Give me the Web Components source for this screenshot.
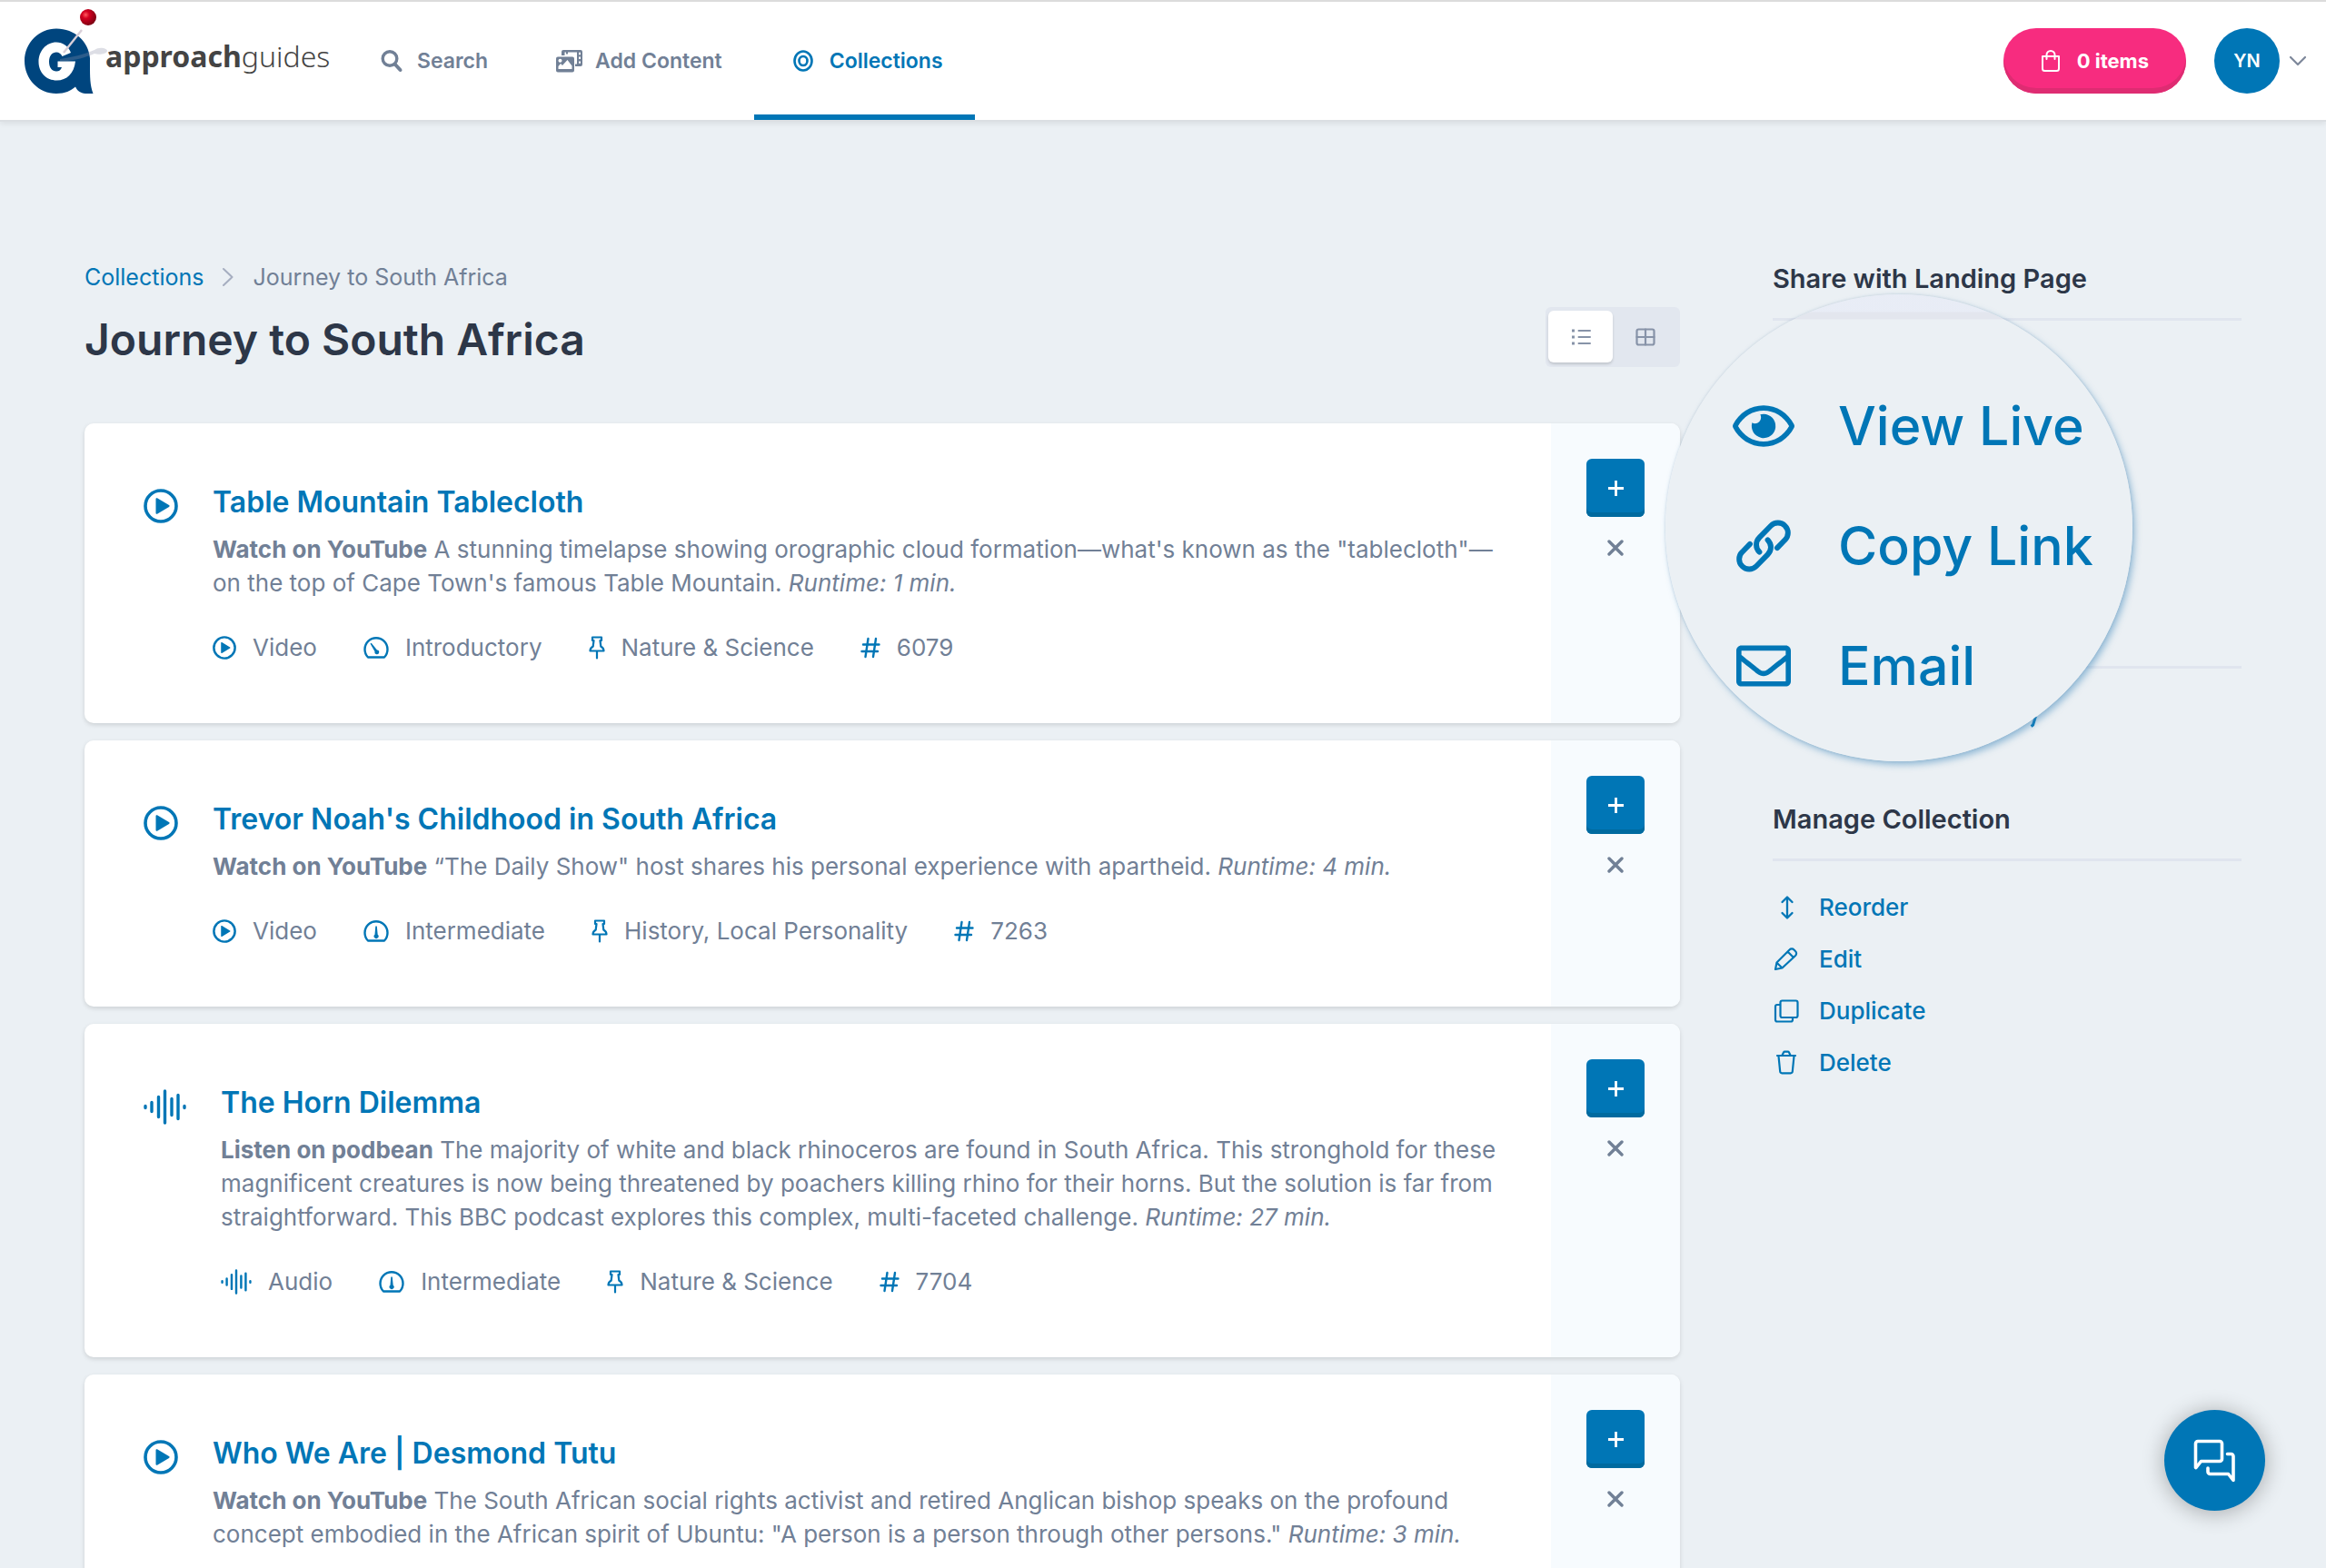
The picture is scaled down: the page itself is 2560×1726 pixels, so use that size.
<!DOCTYPE html>
<html lang="en">
<head>
<meta charset="utf-8">
<meta name="viewport" content="width=device-width, initial-scale=1">
<title>Journey to South Africa</title>
<style>
  :root {
    --blue: #0076b6;
    --blue-dark: #006a9f;
    --pink: #f72c7f;
    --pink-dark: #de2c72;
    --ink: #2d3748;
    --muted: #718096;
    --line: #e0e5ee;
    --page: #ebf0f4;
    --tint: #f7fbfe;
  }
  body {
    margin: 0;
    background: var(--page);
    color: var(--muted);
    font-family: Inter, "Liberation Sans", sans-serif;
    font-size: 26px;
    line-height: 37px;
  }
</style>
</head>
<body>
<ag-app>
  <ag-header slot="header">
    <ag-nav-link icon="search" href="#search">Search</ag-nav-link>
    <ag-nav-link icon="media" href="#add">Add Content</ag-nav-link>
    <ag-nav-link icon="target" href="#collections" current>Collections</ag-nav-link>
    <ag-cart slot="account">0 items</ag-cart>
    <ag-user slot="account">YN</ag-user>
  </ag-header>

  <ag-title slot="content" parent="Collections">Journey to South Africa</ag-title>

  <ag-card slot="content" icon="play">
    <span slot="title">Table Mountain Tablecloth</span>
    <b>Watch on YouTube</b> A stunning timelapse showing orographic cloud formation—what's known as the "tablecloth"—on the top of Cape Town's famous Table Mountain. <i>Runtime: 1 min.</i>
    <ag-meta slot="meta" icon="play">Video</ag-meta>
    <ag-meta slot="meta" icon="gauge-low">Introductory</ag-meta>
    <ag-meta slot="meta" icon="pin">Nature &amp; Science</ag-meta>
    <ag-meta slot="meta" icon="hash">6079</ag-meta>
  </ag-card>

  <ag-card slot="content" icon="play">
    <span slot="title">Trevor Noah's Childhood in South Africa</span>
    <b>Watch on YouTube</b> “The Daily Show" host shares his personal experience with apartheid. <i>Runtime: 4 min.</i>
    <ag-meta slot="meta" icon="play">Video</ag-meta>
    <ag-meta slot="meta" icon="gauge-mid">Intermediate</ag-meta>
    <ag-meta slot="meta" icon="pin">History, Local Personality</ag-meta>
    <ag-meta slot="meta" icon="hash">7263</ag-meta>
  </ag-card>

  <ag-card slot="content" icon="wave">
    <span slot="title">The Horn Dilemma</span>
    <b>Listen on podbean</b> The majority of white and black rhinoceros are found in South Africa. This stronghold for these magnificent creatures is now being threatened by poachers killing rhino for their horns. But the solution is far from straightforward. This BBC podcast explores this complex, multi-faceted challenge. <i>Runtime: 27 min.</i>
    <ag-meta slot="meta" icon="wave">Audio</ag-meta>
    <ag-meta slot="meta" icon="gauge-mid">Intermediate</ag-meta>
    <ag-meta slot="meta" icon="pin">Nature &amp; Science</ag-meta>
    <ag-meta slot="meta" icon="hash">7704</ag-meta>
  </ag-card>

  <ag-card slot="content" icon="play">
    <span slot="title">Who We Are | Desmond Tutu</span>
    <b>Watch on YouTube</b> The South African social rights activist and retired Anglican bishop speaks on the profound concept embodied in the African spirit of Ubuntu: "A person is a person through other persons." <i>Runtime: 3 min.</i>
  </ag-card>

  <ag-section slot="aside" heading="Share with Landing Page" rows="4"></ag-section>
  <ag-section slot="aside" rows="1"><ag-icon name="tail"></ag-icon></ag-section>
  <ag-section slot="aside" heading="Manage Collection">
    <ag-action icon="reorder" href="#reorder">Reorder</ag-action>
    <ag-action icon="edit" href="#edit">Edit</ag-action>
    <ag-action icon="duplicate" href="#duplicate">Duplicate</ag-action>
    <ag-action icon="trash" href="#delete">Delete</ag-action>
  </ag-section>

  <ag-lens slot="lens">
    <ag-action large icon="eye" href="#view">View Live</ag-action>
    <ag-action large icon="link" href="#copy">Copy Link</ag-action>
    <ag-action large icon="mail" href="#email">Email</ag-action>
  </ag-lens>

  <ag-chat slot="chat"></ag-chat>
</ag-app>

<script>
/* name: [viewBox, width, height, markup] */
const LINE = 'fill="none" stroke="currentColor" stroke-linecap="round" stroke-linejoin="round"';
const GAUGE = '<path d="M5 22.5C2.8 20.3 1.5 17.2 1.5 13.8a12.5 12.5 0 0 1 25 0c0 3.400-1.300 6.500-3.500 8.700z" ' + LINE + ' stroke-width="2.400"/>';
const ICONS = {
  search: ['0 0 24 26', 24, 26, `<circle cx="10" cy="10.500" r="7.800" ${LINE} stroke-width="3.400"/><path d="M16 17l5.500 6" ${LINE} stroke-width="4"/>`],
  media: ['0 0 29 26', 29, 26, `<path fill-rule="evenodd" fill="currentColor" d="M8 1h19a2 2 0 0 1 2 2v14a2 2 0 0 1-2 2h-6v-2.500h2v-13H9.500V7H6V3a2 2 0 0 1 2-2zM11 3.500v2h2v-2zM25 3.800v2.400h2V3.800zM25 8.600V11h2V8.600zM25 13.400v2.400h2v-2.400z"/><path fill-rule="evenodd" fill="currentColor" d="M2 8.500h16a2 2 0 0 1 2 2v13a2 2 0 0 1-2 2H2a2 2 0 0 1-2-2v-13a2 2 0 0 1 2-2zM2.500 22h15v-3.500l-5-6.500-5.500 6-2-2-2.500 3zM4.500 10.800a2 2 0 1 0 .010 0z"/>`],
  target: ['0 0 22 26', 22, 26, `<ellipse cx="11" cy="13" rx="9.500" ry="10.500" ${LINE} stroke-width="2.600"/><ellipse cx="11" cy="13" rx="4.500" ry="5" ${LINE} stroke-width="2.600"/>`],
  bag: ['0 0 22 26', 22, 26, `<path d="M2 8h18v13.500a2.500 2.500 0 0 1-2.500 2.500h-13A2.500 2.500 0 0 1 2 21.500z" ${LINE} stroke-width="2"/><path d="M6.500 11V6.500a4.500 4.500 0 0 1 9 0V11" ${LINE} stroke-width="2"/>`],
  down: ['0 0 20 12', 20, 12, `<path d="M2 2l8 8 8-8" ${LINE} stroke-width="2.200"/>`],
  right: ['0 0 14 22', 14, 22, `<path d="M2 2l9.500 9L2 20" ${LINE} stroke-width="2"/>`],
  list: ['0 0 22 20', 22, 20, `<path d="M8.500 3H21M8.500 10H21M8.500 17H21" ${LINE} stroke-width="2"/><path d="M1 1.500h3v3H1zM1 8.500h3v3H1zM1 15.500h3v3H1z" fill="currentColor"/>`],
  grid: ['0 0 22 20', 22, 20, `<rect x="1.500" y="1.500" width="19" height="17" rx="2" ${LINE} stroke-width="2.200"/><path d="M11 1.500v17M1.500 10h19" ${LINE} stroke-width="2.200"/>`],
  play: ['0 0 38 38', 38, 38, `<circle cx="19" cy="19" r="17" ${LINE} stroke-width="3.600"/><path d="M13.500 11.200v15.600a1 1 0 0 0 1.500.9l13-7.800a1 1 0 0 0 0-1.800l-13-7.800a1 1 0 0 0-1.500.9z" fill="currentColor"/>`],
  wave: ['0 0 47 39', 47, 39, `<path d="M2 18.500v2M9 14.500v10M16.500 8.500v22M23.500 2v35M31 10.500v18M38 6.500v26M45 18.500v2" ${LINE} stroke-width="3.400"/>`],
  'gauge-low': ['0 0 28 25', 28, 25, GAUGE + '<path d="M7.500 7.500l1.200-.8 6.300 7.800a2.400 2.400 0 1 1-2.500 1.800z" fill="currentColor"/>'],
  'gauge-mid': ['0 0 28 25', 28, 25, GAUGE + '<path d="M13.300 6.500h1.500l.9 9.200a2.500 2.500 0 1 1-3.200 0z" fill="currentColor"/>'],
  pin: ['0 0 18 26', 18, 26, `<path d="M4 1.500h10v3.500h-1.500l.8 6.500c2 1.200 3.200 2.800 3.200 5h-15c0-2.200 1.200-3.800 3.200-5L5.500 5H4z" ${LINE} stroke-width="2.200"/><path d="M9 17v7.500" ${LINE} stroke-width="2.200"/>`],
  hash: ['0 0 22 24', 22, 24, `<path d="M8.500 2l-3 20M17 2l-3 20M3 8.500h17.500M1.500 16h17.500" ${LINE} stroke-width="2.400"/>`],
  plus: ['0 0 19 19', 19, 19, `<path d="M9.500 1v17M1 9.500h17" fill="none" stroke="currentColor" stroke-width="2.800"/>`],
  cross: ['0 0 18 18', 18, 18, `<path d="M2 2l14 14M16 2L2 16" ${LINE} stroke-width="3.400"/>`],
  reorder: ['0 0 28 26', 28, 26, `<path d="M15 2v22M9.500 7L15 1.500 20.500 7M9.500 19l5.500 5.500 5.500-5.500" ${LINE} stroke-width="2.300"/>`],
  edit: ['0 0 28 26', 28, 26, `<path d="M2 24l1.500-7.500L17.500 2.500a3.400 3.400 0 0 1 5 0l1.500 1.500a3.400 3.400 0 0 1 0 5L9.500 22.500zM16 5l6 6M3.800 17l5.200 5" ${LINE} stroke-width="2.200"/>`],
  duplicate: ['0 0 28 26', 28, 26, `<rect x="7.500" y="1.500" width="19" height="18.500" rx="2" ${LINE} stroke-width="2.200"/><path d="M7 6H4a2 2 0 0 0-2 2v14.500a2 2 0 0 0 2 2h15a2 2 0 0 0 2-2V20.500" ${LINE} stroke-width="2.200"/>`],
  trash: ['0 0 28 27', 28, 27, `<path d="M4 6h20M5.500 6.500l1.700 17a2 2 0 0 0 2 1.800h9.600a2 2 0 0 0 2-1.800l1.700-17M9.500 5.500l1.500-3a1.500 1.500 0 0 1 1.300-.8h3.400a1.500 1.500 0 0 1 1.300.8l1.500 3" ${LINE} stroke-width="2.200"/>`],
  eye: ['0 64 576 384', 68, 46, '<path fill="currentColor" d="M288 144a110.940 110.940 0 0 0-31.240 5 55.400 55.400 0 0 1 7.240 27 56 56 0 0 1-56 56 55.400 55.400 0 0 1-27-7.240A111.710 111.710 0 1 0 288 144zm284.520 97.400C518.290 135.590 410.930 64 288 64S57.680 135.640 3.480 241.410a32.350 32.350 0 0 0 0 29.190C57.710 376.410 165.070 448 288 448s230.320-71.640 284.520-177.410a32.350 32.350 0 0 0 0-29.190zM288 400c-98.650 0-189.090-55-237.930-144C98.910 167 189.340 112 288 112s189.090 55 237.930 144C477.100 345 386.660 400 288 400z"/>'],
  link: ['0.8 0.8 22.400 22.400', 60, 60, `<path d="M10.300 14.500c-1.700-1.700-1.700-4.300 0-6l4.700-4.800a4.050 4.050 0 0 1 5.800 0 4.050 4.050 0 0 1 0 5.800l-3.200 3.300M13.700 9.500c1.700 1.700 1.700 4.300 0 6L9 20.300a4.050 4.050 0 0 1-5.800 0 4.050 4.050 0 0 1 0-5.800l3.200-3.300" ${LINE} stroke-width="2.200"/>`],
  mail: ['0 64 512 384', 60, 46, '<path fill="currentColor" d="M464 64H48C21.490 64 0 85.490 0 112v288c0 26.510 21.490 48 48 48h416c26.510 0 48-21.490 48-48V112c0-26.510-21.490-48-48-48zm0 48v40.805c-22.422 18.259-58.168 46.651-134.587 106.490-16.841 13.247-50.201 45.072-73.413 44.701-23.208.375-56.579-31.459-73.413-44.701C106.180 199.465 70.425 171.067 48 152.805V112h416zM48 400V214.398c22.914 18.251 55.409 43.862 104.938 82.646 21.857 17.205 60.134 55.186 103.062 54.955 42.717.231 80.509-37.199 103.053-54.947 49.528-38.783 82.032-64.401 104.947-82.653V400H48z"/>'],
  chat: ['0 0 48 48', 48, 48, `<path d="M5 2.500h24a2.500 2.500 0 0 1 2.500 2.500v17a2.500 2.500 0 0 1-2.500 2.500H8.500L3 31.500a.3.300 0 0 1-.5-.2V5A2.500 2.500 0 0 1 5 2.500z" ${LINE} stroke-width="3.600"/><path d="M37.500 16.500h4A2.500 2.500 0 0 1 44 19v26.500l-5.500-7H18.500a2.500 2.500 0 0 1-2.500-2.500v-4" ${LINE} stroke-width="3.600"/>`],
  tail: ['0 0 300 57', 300, 57, `<path d="M289.500 30.500l-3 9.500-2 1.500" fill="none" stroke="currentColor" stroke-width="3"/>`],
  logo: ['0 0 90 100', 90, 100, `
    <defs><radialGradient id="ball" cx=".35" cy=".35" r=".75"><stop offset="0" stop-color="#ff5a5e"/><stop offset=".3" stop-color="#d4001f"/><stop offset="1" stop-color="#6d0010"/></radialGradient></defs>
    <path d="M36 25.500C17 25.500 1 41 1 61s15.500 36 35 36c9.500 0 16-3 21-7.500 2 4.500 5.500 7 11 7.500h8.500C73 88 73 78 73 66V58C71.500 40 56.500 25.500 36 25.500z" fill="#00457e"/>
    <path d="M52 52c-3-7.500-9-11.500-16-11.500C25 40.500 16.500 50 16.500 62S25 82.500 36.500 82.500c11 0 19-7.500 20.500-21H37.500v6.500h4.500c-1 3-3 4.500-6 4.500-4.500 0-8-4-8-10.500s3.500-10.500 8-10.500c3 0 5 1.500 6.500 4.500z" fill="#fff"/>
    <path d="M40 61c14 1 28-4 38-8 5 2 14 0 14-3s-9-5-14-1c-12 5-25 8-38 10z" fill="#8d93a8" opacity=".3"/>
    <path d="M44 52L64 27" stroke="#d9cfd8" stroke-width="2.400"/>
    <circle cx="71" cy="13" r="9" fill="url(#ball)"/>`]
};

const define = (tag, html, setup) => {
  const template = document.createElement('template');
  template.innerHTML = html;
  customElements.define(tag, class extends HTMLElement {
    connectedCallback() {
      if (this.shadowRoot) return;
      const root = this.attachShadow({ mode: 'open' });
      root.append(template.content.cloneNode(true));
      if (setup) setup(this, root);
    }
  });
};

define('ag-icon', `<style>
  :host { display: flex; flex: none; }
  svg { display: block; overflow: visible; width: var(--w); height: var(--h); }
</style>`, (host, root) => {
  const [box, w, h, markup] = ICONS[host.getAttribute('name')];
  const width = Number(host.getAttribute('width')) || w;
  const holder = document.createElement('template');
  holder.innerHTML = `<svg viewBox="${box}" aria-hidden="true">${markup}</svg>`;
  host.style.setProperty('--w', width + 'px');
  host.style.setProperty('--h', Math.round(width * h / w) + 'px');
  root.append(holder.content);
});

define('ag-app', `<style>
  :host { display: flex; flex-direction: column; height: 100vh; overflow: hidden; }
  .body { flex: 1; min-height: 0; overflow-y: auto; scrollbar-width: none; }
  .layout { display: grid; grid-template-columns: minmax(0, 1fr) 516px; column-gap: 102px; padding: 152px 93px 60px; }
  main { display: flex; flex-direction: column; gap: 19px; }
  aside { position: relative; }
</style>
<slot name="header"></slot>
<div class="body"><div class="layout">
  <main><slot name="content"></slot></main>
  <aside><slot name="aside"></slot><slot name="lens"></slot></aside>
</div></div>
<slot name="chat"></slot>`);

define('ag-header', `<style>
  :host { display: block; position: relative; z-index: 1; }
  header { display: flex; align-items: stretch; height: 130px; padding: 0 21px 0 26px; background: #fff; border-top: 2px solid #dcdcdc; border-bottom: 2px solid #dbdfe3; box-shadow: 0 2px 6px rgba(0, 0, 0, .08); }
  .logo { display: flex; align-items: flex-start; width: 350px; padding-top: 4px; color: #444; text-decoration: none; font: 300 32px/60px "Noto Sans", "Open Sans", sans-serif; }
  .logo span { margin-top: 26px; }
  .logo b { font-weight: 700; }
  nav { display: flex; }
  .account { display: flex; align-items: center; margin-left: auto; }
</style>
<header>
  <a class="logo" href="#home"><ag-icon name="logo"></ag-icon><span><b>approach</b>guides</span></a>
  <nav aria-label="Main"><slot></slot></nav>
  <div class="account"><slot name="account"></slot></div>
</header>`);

define('ag-nav-link', `<style>
  :host { display: flex; color: var(--muted); }
  :host([current]) { color: var(--blue); }
  a { display: flex; align-items: center; gap: 14px; padding: 6px 35px 0 40px; border-bottom: 6px solid transparent; color: inherit; text-decoration: none; font-size: 23px; font-weight: 600; }
  :host([current]) a { border-color: var(--blue); }
  .box { display: flex; justify-content: center; width: 29px; }
</style>
<a><span class="box"></span><span><slot></slot></span></a>`, (host, root) => {
  root.querySelector('a').href = host.getAttribute('href');
  root.querySelector('.box').innerHTML = `<ag-icon name="${host.getAttribute('icon')}"></ag-icon>`;
});

define('ag-cart', `<style>
  :host { display: flex; }
  button { display: flex; align-items: center; gap: 18px; height: 72px; padding: 0 41px; border: 0; border-radius: 36px; background: var(--pink); box-shadow: inset 0 -6px var(--pink-dark); color: #fff; font: 700 22px/32px Inter, sans-serif; }
</style>
<button type="button"><ag-icon name="bag"></ag-icon><slot></slot></button>`);

define('ag-user', `<style>
  :host { display: flex; margin-left: 31px; }
  button { display: flex; align-items: center; gap: 10px; padding: 0; border: 0; background: none; color: #7d879a; }
  span { width: 72px; border-radius: 50%; background: var(--blue); color: #fff; text-align: center; font: 600 20px/72px Inter, sans-serif; }
</style>
<button type="button"><span><slot></slot></span><ag-icon name="down"></ag-icon></button>`);

define('ag-title', `<style>
  :host { display: flex; justify-content: space-between; align-items: flex-end; margin-bottom: 43px; }
  nav { display: flex; align-items: center; gap: 20px; font-size: 25px; line-height: 38px; color: var(--muted); }
  nav a { color: var(--blue); text-decoration: none; }
  nav ag-icon { color: #a6aec0; }
  h1 { margin: 20px 0 0; color: var(--ink); font-size: 48px; line-height: 60px; font-weight: 600; }
  .views { display: flex; padding: 4px 3px 5px; border-radius: 6px; background: #e2e7ef; }
  button { display: flex; align-items: center; justify-content: center; width: 71px; height: 57px; padding: 0; border: 0; border-radius: 6px; background: none; color: #8793a8; }
  button[aria-pressed="true"] { background: #fff; box-shadow: 0 2px 3px rgba(0, 0, 0, .15); }
</style>
<div>
  <nav aria-label="Breadcrumb"><a href="#collections"></a><ag-icon name="right"></ag-icon><span></span></nav>
  <h1><slot></slot></h1>
</div>
<div class="views">
  <button type="button" aria-label="List view" aria-pressed="true"><ag-icon name="list"></ag-icon></button>
  <button type="button" aria-label="Grid view" aria-pressed="false"><ag-icon name="grid"></ag-icon></button>
</div>`, (host, root) => {
  root.querySelector('a').textContent = host.getAttribute('parent');
  root.querySelector('nav span').textContent = host.textContent;
});

define('ag-card', `<style>
  :host { display: block; }
  article { display: flex; border-radius: 10px; background: #fff; box-shadow: 0 2px 5px rgba(0, 0, 0, .13); overflow: hidden; }
  .main { flex: 1; min-width: 0; display: flex; gap: 38px; padding: 64px 48px 64px 65px; }
  .kind { padding-top: 8px; color: var(--blue); }
  h2 { margin: 0 0 10px; font-size: 32px; line-height: 46px; font-weight: 600; }
  h2 a { color: var(--blue); text-decoration: none; }
  p { margin: 0; }
  .meta { display: flex; flex-wrap: wrap; gap: 51px; margin-top: 34px; }
  .side { flex: none; width: 142px; display: flex; flex-direction: column; align-items: center; gap: 18px; padding-top: 39px; background: var(--tint); }
  button { display: flex; align-items: center; justify-content: center; padding: 0; border: 0; border-radius: 6px; }
  .add { width: 64px; height: 64px; background: var(--blue); box-shadow: inset 0 -5px var(--blue-dark); color: #fff; }
  .remove { width: 32px; height: 32px; background: none; color: var(--muted); }
</style>
<article>
  <div class="main">
    <div class="kind"></div>
    <div>
      <h2><a href="#item"><slot name="title"></slot></a></h2>
      <p><slot></slot></p>
      <div class="meta"><slot name="meta"></slot></div>
    </div>
  </div>
  <div class="side">
    <button class="add" type="button" aria-label="Add"><ag-icon name="plus"></ag-icon></button>
    <button class="remove" type="button" aria-label="Remove"><ag-icon name="cross"></ag-icon></button>
  </div>
</article>`, (host, root) => {
  root.querySelector('.kind').innerHTML = `<ag-icon name="${host.getAttribute('icon')}"></ag-icon>`;
});

define('ag-meta', `<style>
  :host { display: flex; align-items: center; gap: 18px; line-height: 38px; }
  ag-icon { color: var(--blue); }
</style>`, (host, root) => {
  const name = host.getAttribute('icon');
  const width = { play: 26, wave: 34 }[name] || '';
  const holder = document.createElement('template');
  holder.innerHTML = `<ag-icon name="${name}" width="${width}"></ag-icon><span><slot></slot></span>`;
  root.append(holder.content);
});

define('ag-section', `<style>
  :host { display: block; margin-bottom: 67px; }
  h2 { box-sizing: border-box; height: 66px; margin: 1px 0 22px; border-bottom: 3px solid var(--line); color: var(--ink); font-size: 29px; line-height: 40px; font-weight: 600; }
  div { min-height: calc(var(--rows) * 57px); color: var(--blue); }
</style>
<h2></h2><div><slot></slot></div>`, (host, root) => {
  root.querySelector('h2').textContent = host.getAttribute('heading') || '';
  host.style.setProperty('--rows', host.getAttribute('rows') || 0);
});

define('ag-action', `<style>
  :host { display: block; }
  a { display: inline-flex; align-items: center; gap: 22px; padding-left: 1px; color: var(--blue); text-decoration: none; font-weight: 500; line-height: 57px; }
  .box { display: flex; justify-content: center; width: 28px; }
  :host([large]) a { gap: 48px; font-size: 59px; line-height: 132px; }
  :host([large]) .box { width: 68px; }
</style>
<a><span class="box"></span><span><slot></slot></span></a>`, (host, root) => {
  root.querySelector('a').href = host.getAttribute('href');
  root.querySelector('.box').innerHTML = `<ag-icon name="${host.getAttribute('icon')}"></ag-icon>`;
});

define('ag-lens', `<style>
  :host { position: absolute; top: 38px; left: -118px; box-sizing: border-box; width: 514px; height: 514px; padding: 79px 0 0 73px; border-radius: 50%;
    background: linear-gradient(rgba(232, 236, 246, .9) 0 19px, #e3e6ee 20px 27px, var(--page) 28px);
    box-shadow: 3px 4px 7px rgba(70, 140, 190, .5), 0 0 3px rgba(90, 120, 150, .25); }
</style><slot></slot>`);

define('ag-chat', `<style>
  :host { position: fixed; right: 67px; bottom: 63px; z-index: 2; }
  button { display: flex; align-items: center; justify-content: center; width: 111px; height: 111px; padding: 0; border: 0; border-radius: 50%; background: var(--blue); box-shadow: 0 2px 24px rgba(0, 0, 0, .3); color: #fff; }
</style>
<button type="button" aria-label="Open chat"><ag-icon name="chat"></ag-icon></button>`);
</script>
</body>
</html>
